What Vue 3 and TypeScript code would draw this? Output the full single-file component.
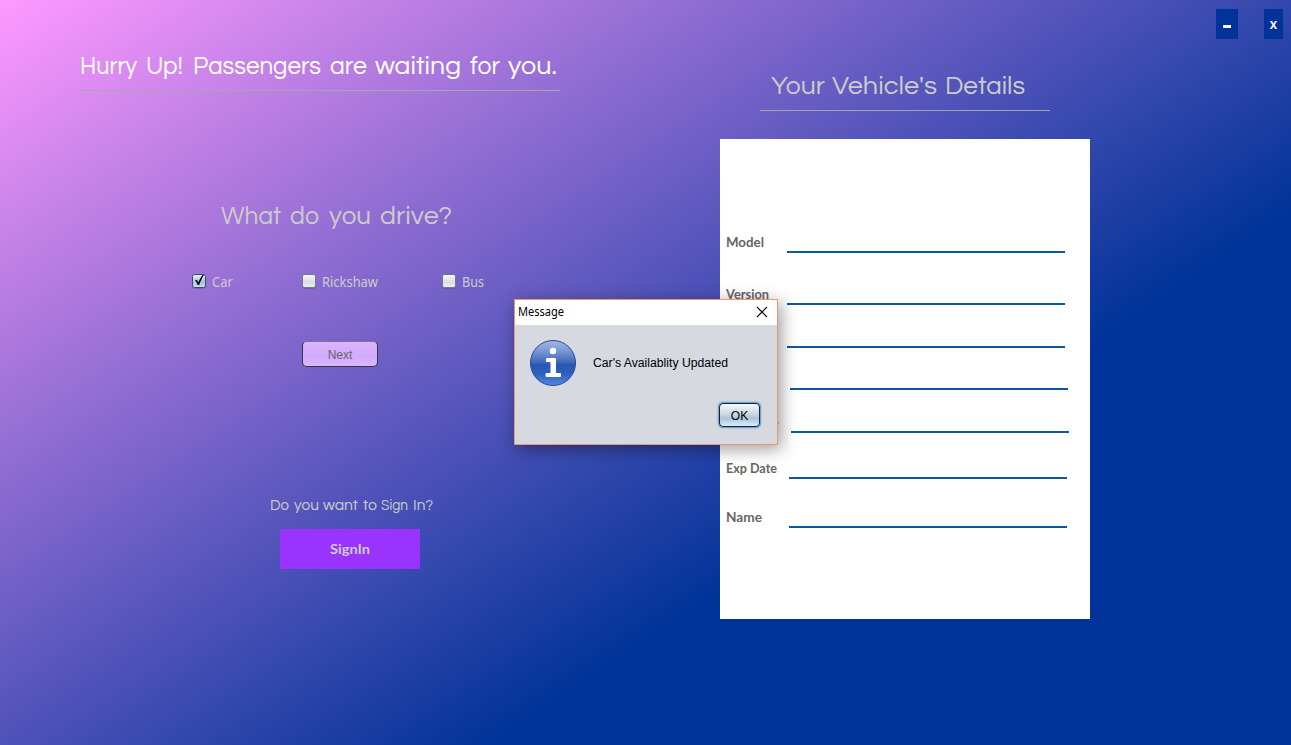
<script setup lang="ts">
interface Vehicle { name: string; checked: boolean; width: number }
interface Field { label: string; gap: number; rule: number; x: number; y: number; text?: number }
type Word = [text: string, x: number, width: number]

const titleWords: Word[] = [
  ['Hurry', 0, 57], ['Up!', 66, 37], ['Passengers', 113, 128], ['are', 250, 37],
  ['waiting', 295, 86], ['for', 390, 30], ['you.', 428, 49],
]
const questionWords: Word[] = [['What', 0, 60], ['do', 69, 29], ['you', 108, 42], ['drive?', 159, 72]]
const detailsWords: Word[] = [['Your', 0, 54], ["Vehicle's", 61, 105], ['Details', 174, 80]]
const signinWords: Word[] = [['Do', 0, 19], ['you', 24, 25], ['want', 53, 35], ['to', 93, 14], ['Sign', 111, 27], ['In?', 143, 20]]

const vehicles: Vehicle[] = [
  { name: 'Car', checked: true, width: 21 },
  { name: 'Rickshaw', checked: false, width: 56 },
  { name: 'Bus', checked: false, width: 22 },
]

const fields: Field[] = [
  { label: 'Model', gap: 97, rule: 61, x: 0, y: 13, text: 38 },
  { label: 'Version', gap: 52, rule: 61, x: 0, y: 13, text: 43 },
  { label: '', gap: 43, rule: 61, x: 0, y: 13 },
  { label: '', gap: 42, rule: 64, x: 0, y: 13 },
  { label: '.', gap: 43, rule: 65, x: 50, y: 10 },
  { label: 'Exp Date', gap: 46, rule: 63, x: 0, y: 13, text: 51 },
  { label: 'Name', gap: 49, rule: 63, x: 0, y: 13, text: 36 },
]
</script>

<template>
  <main class="window">
    <div class="controls">
      <button class="control minimize" aria-label="Minimize"><i></i></button>
      <button class="control close">X</button>
    </div>

    <section class="left">
      <h1 class="title">
        <svg width="480" height="34"><text y="25"><tspan v-for="w in titleWords" :key="w[0]" :x="w[1]" :textLength="w[2]" lengthAdjust="spacingAndGlyphs">{{ w[0] }}</tspan></text></svg>
      </h1>
      <h2 class="question">
        <svg width="240" height="34"><text y="25"><tspan v-for="w in questionWords" :key="w[0]" :x="w[1]" :textLength="w[2]" lengthAdjust="spacingAndGlyphs">{{ w[0] }}</tspan></text></svg>
      </h2>
      <div class="vehicles">
        <label v-for="v in vehicles" :key="v.name" class="vehicle">
          <svg class="check" width="16" height="17" viewBox="0 0 16 17">
            <defs>
              <linearGradient id="boxOff" x2="0" y2="1"><stop offset="0" stop-color="#fbfbfc" /><stop offset=".55" stop-color="#dadce2" /><stop offset="1" stop-color="#eff0f3" /></linearGradient>
              <linearGradient id="boxOn" x2="0" y2="1"><stop offset="0" stop-color="#eff5f9" /><stop offset=".55" stop-color="#a9c1d5" /><stop offset="1" stop-color="#c9e0f2" /></linearGradient>
            </defs>
            <rect x="1.5" y="2.5" width="13" height="13" rx="2" fill="none" stroke="#4b4380" stroke-opacity=".35" />
            <rect x="1.5" y="1.5" width="13" height="13" rx="2" :fill="v.checked ? 'url(#boxOn)' : 'url(#boxOff)'" :stroke="v.checked ? '#3c4c68' : '#777581'" />
            <path v-if="v.checked" d="M4 7.2 L6 7 L7.3 9.600 C8.500 6.500 9.800 4 11.800 1.700 L13 2 C11 5 9.500 8 8.200 12 H6.700 C6 10 5.200 8.400 4 7.200Z" />
          </svg>
          <svg class="vehicle-name" width="60" height="20"><text x="0" y="15" :textLength="v.width" lengthAdjust="spacingAndGlyphs">{{ v.name }}</text></svg>
        </label>
      </div>
      <button class="next">Next</button>
      <div class="signin">
        <svg width="164" height="20"><text y="14"><tspan v-for="w in signinWords" :key="w[0]" :x="w[1]" :textLength="w[2]" lengthAdjust="spacingAndGlyphs">{{ w[0] }}</tspan></text></svg>
        <button class="signin-button">
          <svg width="42" height="20"><text x="1" y="15" textLength="40" lengthAdjust="spacingAndGlyphs">SignIn</text></svg>
        </button>
      </div>
    </section>

    <section class="right">
      <h2 class="details-title">
        <svg width="270" height="34"><text y="25"><tspan v-for="w in detailsWords" :key="w[0]" :x="w[1]" :textLength="w[2]" lengthAdjust="spacingAndGlyphs">{{ w[0] }}</tspan></text></svg>
      </h2>
      <div class="card">
        <div v-for="(f, i) in fields" :key="i" class="field" :style="{ height: f.gap + 'px' }">
          <svg height="20" :style="{ width: f.rule + 'px' }"><text v-if="f.label" :x="f.x" :y="f.y" :textLength="f.text" lengthAdjust="spacingAndGlyphs">{{ f.label }}</text></svg>
          <span class="rule"></span>
        </div>
      </div>
    </section>

    <div class="dialog" role="dialog">
      <header class="dialog-bar">
        <svg width="60" height="20"><text x="0" y="13" textLength="46" lengthAdjust="spacingAndGlyphs">Message</text></svg>
        <svg class="dialog-close" width="12" height="12" viewBox="0 0 12 12"><path d="M1 1 L11 11 M11 1 L1 11" stroke="#000" stroke-width="1.15" /></svg>
      </header>
      <div class="dialog-body">
        <svg class="info" width="48" height="48" viewBox="0 0 48 48">
          <defs>
            <linearGradient id="disc" x2="0" y2="1"><stop offset="0" stop-color="#a4b9e4" /><stop offset=".25" stop-color="#7595d3" /><stop offset=".5" stop-color="#3a65b8" /><stop offset=".53" stop-color="#2857b1" /><stop offset=".75" stop-color="#2f60be" /><stop offset="1" stop-color="#5589e5" /></linearGradient>
          </defs>
          <circle cx="24" cy="24" r="22.5" fill="url(#disc)" stroke="#20499c" stroke-width="1" />
          <circle cx="24" cy="12" r="3.2" fill="#fff" />
          <path d="M18 19 H26 Q27 19 27 20 V34 H31 Q32 34 32 35 V37 Q32 38 31 38 H17.5 Q16.5 38 16.5 37 V35 Q16.5 34 17.5 34 H21.5 V23 H18 Q17 23 17 22 V20 Q17 19 18 19Z" fill="#fff" />
        </svg>
        <svg class="message" width="140" height="20"><text x="0" y="14" textLength="135" lengthAdjust="spacingAndGlyphs">Car's Availablity Updated</text></svg>
        <button class="ok">OK</button>
      </div>
    </div>
  </main>
</template>

<style>
body { margin: 0; overflow: hidden; }
</style>

<style scoped>
.window {
  position: relative;
  display: flex;
  width: 1291px;
  height: 745px;
  overflow: hidden;
  background: linear-gradient(146.31deg, #f9f 0, #039 895px);
  font-family: "Liberation Sans", Arial, sans-serif;
}
svg { display: block; flex: none; }
svg text { fill: currentColor; }
button { padding: 0; border: 0; font: inherit; }
h1, h2 { margin: 0; font-weight: 400; }
.controls { position: absolute; top: 9px; right: 8px; display: flex; gap: 26px; }
.control { display: flex; height: 30px; background: #039; color: #fff; }
.minimize { width: 22px; }
.minimize i { width: 8px; height: 3px; margin: 16px 0 0 7px; background: #fff; }
.close { box-sizing: border-box; width: 19px; align-items: center; justify-content: center; font: bold 11px "Noto Sans", sans-serif; }
.left { width: 720px; flex: none; }
.title, .question, .details-title { font-family: "Century Gothic", Questrial, Lato, sans-serif; font-size: 25.5px; }
.title { box-sizing: border-box; width: 480px; height: 42px; margin: 49px 0 0 80px; border-bottom: 1px solid #a7a5ad; color: #fff; }
.question { height: 34px; margin: 108px 0 0 221px; color: #ccc; }
.vehicles { display: grid; grid-template-columns: 110px 140px 80px; margin: 40px 0 0 191px; }
.vehicle { display: flex; color: #ccc; font: 14px "Noto Sans", sans-serif; }
.vehicle-name { margin-left: 5px; margin-top: -1px; }
.next { box-sizing: border-box; display: block; width: 76px; height: 26px; margin: 49px 0 0 302px; padding-top: 1px; border: 1px solid #37333f; border-top-color: #81758e; border-radius: 5px; background: linear-gradient(#dab6ff, #d2a9fe 60%, #dab8ff); color: #666; font-size: 12px; }
.signin { width: 164px; margin: 129px 0 0 270px; color: #ccc; font: 15px "Century Gothic", Questrial, Lato, sans-serif; }
.signin-button { display: flex; align-items: center; justify-content: center; width: 140px; height: 40px; margin: 13px 0 0 10px; background: #93f; color: #ccc; font: bold 14px Lato, sans-serif; }
.right { width: 370px; padding-top: 69px; }
.details-title { box-sizing: border-box; width: 290px; height: 42px; margin-left: 40px; padding-left: 11px; border-bottom: 1px solid #a3a3a9; color: #ccc; }
.card { box-sizing: border-box; width: 370px; height: 480px; margin-top: 28px; padding: 17px 0 0 6px; background: #fff; }
.field { display: flex; align-items: flex-end; color: #666; font: bold 12.5px Lato, sans-serif; }
.field svg { margin-bottom: -1px; }
.rule { width: 278px; height: 2px; background: #0c589f; }
.dialog { position: absolute; left: 514px; top: 299px; box-sizing: border-box; width: 264px; height: 146px; border: 1px solid #f0956f; background: #d6d9e0; box-shadow: 3px 4px 16px rgba(0, 0, 0, .4); color: #000; }
.dialog-bar { display: flex; align-items: center; justify-content: space-between; height: 25px; padding: 0 9px 0 3px; background: #fff; font: 12px "Noto Sans", sans-serif; }
.dialog-close { margin-bottom: 2px; }
.dialog-body { display: grid; grid-template-columns: 78px 1fr; grid-template-rows: 62px 26px; padding-top: 14px; font-size: 12px; }
.info { margin-left: 14px; }
.message { margin-top: 14px; }
.ok { box-sizing: border-box; grid-column: 2; justify-self: end; width: 41px; height: 24px; margin: 2px 17px 0 0; padding-top: 2px; border: 1px solid #19233b; border-radius: 4px; background: linear-gradient(#f5f8fa, #cbd9e5 45%, #abc3d8 65%, #d9edff); box-shadow: 0 0 0 1px #70a4cf, 0 0 2px 1px #73a4d1; font-size: 12px; }
</style>
